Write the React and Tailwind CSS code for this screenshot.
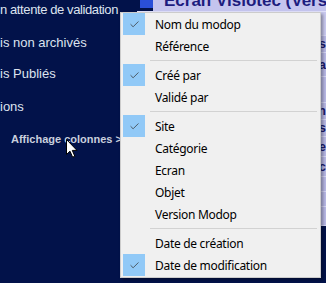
import { Check } from 'lucide-react';

const items = [
  { label: 'Nom du modop', checked: true },
  { label: 'Référence' },
  'sep',
  { label: 'Créé par', checked: true },
  { label: 'Validé par' },
  'sep',
  { label: 'Site', checked: true },
  { label: 'Catégorie' },
  { label: 'Ecran' },
  { label: 'Objet' },
  { label: 'Version Modop' },
  'sep',
  { label: 'Date de création' },
  { label: 'Date de modification', checked: true },
];

const rows = [
  { h: 'h-[24px]', text: '', bg: 'bg-[#c9c9ef]' },
  { h: 'h-[17px]', text: 'Modops' },
  { h: 'h-[24px]', text: 'Catégoria' },
  { h: 'h-[26px]', text: '' },
  { h: 'h-[17px]', text: 'Ecran' },
  { h: 'h-[17px]', text: 'Modops' },
  { h: 'h-[20px]', text: 'Objete' },
  { h: 'h-[20px]', text: 'Visiotec' },
  { h: 'h-[15px]', text: '' },
  { h: 'h-[15px]', text: '' },
  { h: 'h-[19px]', text: '' },
];

function Cursor() {
  return (
    <svg width="13" height="20" viewBox="0 0 13 20" className="absolute left-[66px] top-[139px]">
      <path d="M0.5 0.5 L0.5 15.5 L4 12.2 L6.6 18.2 L8.8 17.2 L6.3 11.4 L11 11.4 Z" fill="#ffffff" stroke="#000000" strokeWidth="1" strokeLinejoin="miter" />
    </svg>
  );
}

function ColumnMenu() {
  return (
    <div className="absolute left-[120px] top-[12px] w-[201px] bg-[#f0f0f0] border border-[#cccccc] pb-[1px] shadow-[2px_2px_3px_rgba(0,0,0,0.35)] font-['Noto_Sans',sans-serif] text-[12px] tracking-[-0.3px] text-black">
      {items.map((it, i) =>
        it === 'sep' ? (
          <div key={i} className="h-[7px] flex items-center pl-[29px] pr-[3px]">
            <div className="h-px w-full bg-[#d2d2d2]" />
          </div>
        ) : (
          <div key={i} className="h-[22px] flex items-center pl-[2px]">
            <div className={`w-[22px] h-[22px] flex items-center justify-center ${it.checked ? 'bg-[#91c9f7]' : ''}`}>
              {it.checked && <Check size={11} strokeWidth={1.6} color="#333333" />}
            </div>
            <span className="ml-[10px] pt-[2px] leading-[20px]">{it.label}</span>
          </div>
        )
      )}
    </div>
  );
}

export default function App() {
  return (
    <div className="relative w-[326px] h-[283px] overflow-hidden bg-[#02124a] flex font-['Liberation_Sans',Arial,sans-serif]">
      <div className="w-[137px] shrink-0 flex flex-col overflow-hidden text-[13px] text-[#dde3ef]">
        <div className="leading-[20px] whitespace-nowrap tracking-[-0.4px]">n attente de validation</div>
        <div className="leading-[20px] mt-[13px] whitespace-nowrap">is non archivés</div>
        <div className="leading-[20px] mt-[11px] whitespace-nowrap">is Publiés</div>
        <div className="leading-[20px] mt-[13px] whitespace-nowrap">ions</div>
        <div className="leading-[20px] mt-[12px] pl-[11px] text-[11px] font-bold text-[#c9cfdd] whitespace-nowrap">Affichage colonnes &gt;</div>
      </div>

      <div className="flex-1 flex flex-col min-w-0">
        <div className="h-[11px] flex items-start overflow-hidden">
          <div className="w-[3px] h-full bg-[#02124a]" />
          <div className="w-[13px] h-[8px] bg-[#2a4fd8]" />
          <div className="flex-1 h-full bg-[#c4c4ee] pl-[11px] overflow-hidden">
            <div className="-mt-[9px] leading-[20px] text-[17px] font-bold text-[#1c1c7e] whitespace-nowrap">Ecran Visiotec (Version)</div>
          </div>
        </div>
        <div className="h-px bg-[#e0e0fa]" />
        <div className="flex flex-col bg-[#b7b7e4]">
          {rows.map((r, i) => (
            <div key={i} className={`${r.h} ${r.bg || ''} border-b border-[#d4d4f4] flex items-center justify-end overflow-hidden text-[13px] font-bold text-[#1c1c6e] whitespace-nowrap`}>
              {r.text}
            </div>
          ))}
        </div>
      </div>

      <Cursor />
      <ColumnMenu />
    </div>
  );
}
